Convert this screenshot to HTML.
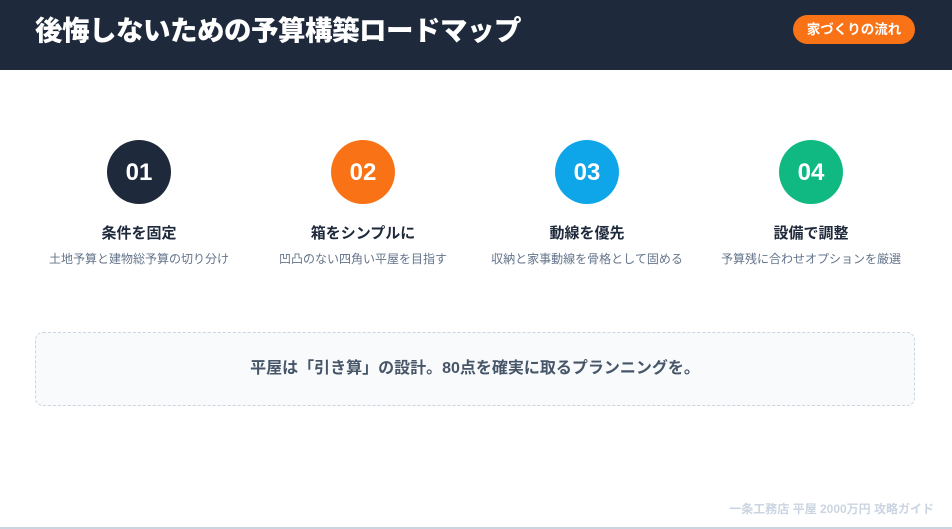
<!DOCTYPE html><html><head><meta charset="utf-8"><style>
*{margin:0;padding:0;box-sizing:border-box}
body{width:952px;height:529px;background:#fff;font-family:"Liberation Sans","Noto Sans CJK JP",sans-serif;position:relative;overflow:hidden;border-bottom:2px solid #cbd5e1}
.hd{position:absolute;left:0;top:0;width:952px;height:70px;background:#1e293b}
.hd h1{position:absolute;left:35px;top:13px;font-size:27.5px;font-weight:900;color:#fff;letter-spacing:-0.5px;line-height:36px}
.tag{position:absolute;left:793px;top:15px;width:122px;height:29px;border-radius:15px;background:#f97316;color:#fff;font-size:13.5px;font-weight:700;text-align:center;line-height:29px}
.col{position:absolute;top:140px;width:224px;text-align:center}
.c{width:64px;height:64px;border-radius:50%;margin:0 auto;color:#fff;font-size:24px;font-weight:700;line-height:66px}
.t{margin-top:20px;font-size:15px;font-weight:700;color:#1e293b;line-height:20px}
.s{margin-top:7px;font-size:12px;color:#64748b;line-height:16px}
.box{position:absolute;left:35px;top:332px;width:880px;height:74px;border:1px dashed #cbd5e1;border-radius:8px;background:#f8fafc;text-align:center;line-height:72px;font-size:16px;font-weight:700;color:#475569}
.ft{position:absolute;right:18px;top:500px;font-size:12px;font-weight:700;color:#cbd5e1}
</style></head><body>
<div class="hd"><h1>後悔しないための予算構築ロードマップ</h1><div class="tag">家づくりの流れ</div></div>
<div class="col" style="left:27px"><div class="c" style="background:#1e293b">01</div><div class="t">条件を固定</div><div class="s">土地予算と建物総予算の切り分け</div></div>
<div class="col" style="left:251px"><div class="c" style="background:#f97316">02</div><div class="t">箱をシンプルに</div><div class="s">凹凸のない四角い平屋を目指す</div></div>
<div class="col" style="left:475px"><div class="c" style="background:#0ea5e9">03</div><div class="t">動線を優先</div><div class="s">収納と家事動線を骨格として固める</div></div>
<div class="col" style="left:699px"><div class="c" style="background:#10b981">04</div><div class="t">設備で調整</div><div class="s">予算残に合わせオプションを厳選</div></div>
<div class="box">平屋は「引き算」の設計。80点を確実に取るプランニングを。</div>
<div class="ft">一条工務店 平屋 2000万円 攻略ガイド</div>
</body></html>
